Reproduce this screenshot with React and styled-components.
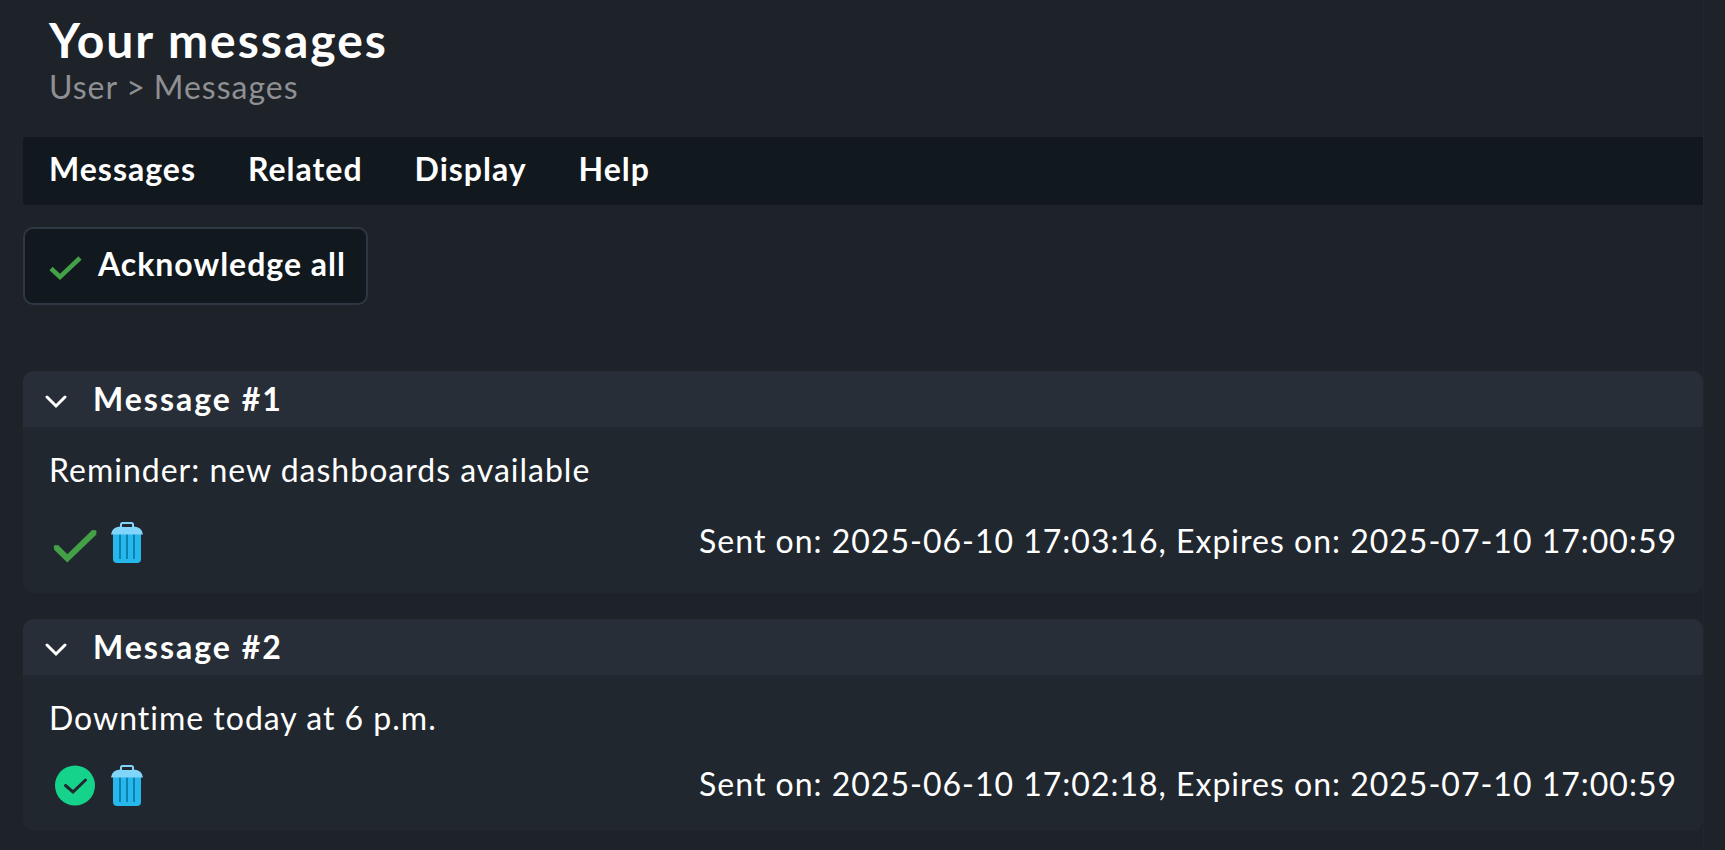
import React, { useState } from "react";
import styled, { createGlobalStyle } from "styled-components";

const GlobalStyle = createGlobalStyle`
  * { box-sizing: border-box; }
  body {
    margin: 0;
    background: #1e2229;
    color: #ffffff;
    font-family: Lato, "Liberation Sans", sans-serif;
    font-size: 32px;
    line-height: 40px;
    letter-spacing: 1px;
  }
`;

const Page = styled.main`
  min-height: 100vh;
  margin-right: 21px;
  padding: 13px 0 19px 23px;
  border-right: 1px solid #21272e;
`;

const Header = styled.header`
  padding: 0 26px;
`;

const Title = styled.h1`
  margin: 0;
  font-size: 48px;
  line-height: 54px;
  font-weight: 700;
  letter-spacing: 2px;
`;

const Breadcrumb = styled.nav`
  display: flex;
  gap: 8px;
  color: #8e9094;
`;

const Crumb = styled.a`
  color: inherit;
  text-decoration: none;
`;

const MenuBar = styled.nav`
  display: flex;
  gap: 52px;
  margin-top: 30px;
  padding: 12px 26px 16px;
  border-radius: 4px 0 0 4px;
  background: #11181e;
`;

const MenuButton = styled.button`
  padding: 0;
  border: 0;
  background: none;
  color: inherit;
  font: inherit;
  font-weight: 700;
  letter-spacing: inherit;
  cursor: pointer;
`;

const ActionButton = styled.button`
  display: flex;
  align-items: center;
  gap: 16px;
  margin-top: 22px;
  padding: 15px 20px 19px 24px;
  border: 2px solid #2e3844;
  border-radius: 10px;
  background: #11181e;
  color: inherit;
  font: inherit;
  font-weight: 700;
  letter-spacing: inherit;
  cursor: pointer;
`;

const Messages = styled.div`
  display: flex;
  flex-direction: column;
  gap: 26px;
  margin-top: 66px;
`;

const Card = styled.section`
  overflow: hidden;
  border-radius: 10px;
  background: #21272e;
`;

const CardHeader = styled.h2`
  margin: 0;
  background: #272e37;
  font-size: 32px;
  line-height: 40px;
`;

const Toggle = styled.button`
  display: flex;
  align-items: center;
  gap: 26px;
  width: 100%;
  padding: 8px 22px;
  border: 0;
  background: none;
  color: inherit;
  font: inherit;
  font-weight: 700;
  letter-spacing: 2px;
  cursor: pointer;
`;

const CardBody = styled.div`
  padding: 23px 26px;
`;

const MessageText = styled.p`
  margin: 0 0 26px;
`;

const CardFooter = styled.div`
  display: flex;
  align-items: center;
  justify-content: space-between;
`;

const Actions = styled.div`
  display: flex;
  align-items: center;
  gap: 10px;
`;

const Dates = styled.span`
  padding-bottom: 4px;
`;

const IconButton = styled.button`
  display: flex;
  padding: 0;
  border: 0;
  background: none;
  cursor: pointer;
`;

function CheckIcon() {
  return (
    <svg width="33" height="33" viewBox="0 0 33 33" aria-hidden="true">
      <path d="M2 20.500 L11 29 L31 10" fill="none" stroke="#43a047" strokeWidth="4.500" />
    </svg>
  );
}

function AcceptIcon() {
  return (
    <svg width="52" height="54" viewBox="0 0 52 54" aria-hidden="true">
      <path d="M6.700 31 L18.300 42.300 L45.600 16" fill="none" stroke="#43a047" strokeWidth="6" />
      <path d="M6.700 31 L18.300 42.300 L45.600 16" fill="none" stroke="#43a047" strokeWidth="4" strokeLinecap="round" />
    </svg>
  );
}

function AcknowledgedIcon() {
  return (
    <svg width="52" height="44" viewBox="0 0 52 44" role="img" aria-label="Acknowledged">
      <circle cx="26" cy="21.500" r="20" fill="#15d38a" />
      <path d="M16.500 21.500 L24 28 L36.500 16" fill="none" stroke="#21272e" strokeWidth="3" strokeLinecap="round" />
    </svg>
  );
}

function TrashIcon() {
  return (
    <svg width="32" height="42" viewBox="0 0 32 42" aria-hidden="true">
      <path d="M2 11 H30 V37 Q30 41 26 41 H6 Q2 41 2 37 Z" fill="#26b7ec" />
      <path d="M9 12 V37 M16 12 V37 M23 12 V37" stroke="#0b82b0" strokeWidth="2" />
      <path d="M0 12.500 Q1 5 9 4.500 H23 Q31 5 32 12.500 Z" fill="#81d4fa" />
      <path d="M10 5 V2.500 Q10 1 11.500 1 H20.500 Q22 1 22 2.500 V5" fill="#21272e" stroke="#81d4fa" strokeWidth="2" />
    </svg>
  );
}

function ChevronIcon({ open }) {
  return (
    <svg width="22" height="20" viewBox="0 0 22 20" aria-hidden="true">
      <path
        d={open ? "M2 8 L11 17 L20 8" : "M7 4 L14 11 L7 18"}
        fill="none"
        stroke="#ffffff"
        strokeWidth="3"
        strokeLinecap="round"
      />
    </svg>
  );
}

const MENU = ["Messages", "Related", "Display", "Help"];

const MESSAGES = [
  {
    id: 1,
    text: "Reminder: new dashboards available",
    sent: "2025-06-10 17:03:16",
    expires: "2025-07-10 17:00:59",
    acknowledged: false,
  },
  {
    id: 2,
    text: "Downtime today at 6 p.m.",
    sent: "2025-06-10 17:02:18",
    expires: "2025-07-10 17:00:59",
    acknowledged: true,
  },
];

function MessageCard({ message }) {
  const [open, setOpen] = useState(true);
  return (
    <Card>
      <CardHeader>
        <Toggle aria-expanded={open} onClick={() => setOpen(!open)}>
          <ChevronIcon open={open} />
          Message #{message.id}
        </Toggle>
      </CardHeader>
      {open && (
        <CardBody>
          <MessageText>{message.text}</MessageText>
          <CardFooter>
            <Actions>
              {message.acknowledged ? (
                <AcknowledgedIcon />
              ) : (
                <IconButton aria-label="Acknowledge message">
                  <AcceptIcon />
                </IconButton>
              )}
              <IconButton aria-label="Delete message">
                <TrashIcon />
              </IconButton>
            </Actions>
            <Dates>
              Sent on: {message.sent}, Expires on: {message.expires}
            </Dates>
          </CardFooter>
        </CardBody>
      )}
    </Card>
  );
}

export default function App() {
  return (
    <>
      <GlobalStyle />
      <Page>
        <Header>
          <Title>Your messages</Title>
          <Breadcrumb aria-label="Breadcrumb">
            <Crumb href="#user">User</Crumb>
            <span>&gt;</span>
            <Crumb href="#messages">Messages</Crumb>
          </Breadcrumb>
        </Header>
        <MenuBar aria-label="Page menu">
          {MENU.map((label) => (
            <MenuButton key={label}>{label}</MenuButton>
          ))}
        </MenuBar>
        <ActionButton>
          <CheckIcon />
          Acknowledge all
        </ActionButton>
        <Messages>
          {MESSAGES.map((message) => (
            <MessageCard key={message.id} message={message} />
          ))}
        </Messages>
      </Page>
    </>
  );
}
